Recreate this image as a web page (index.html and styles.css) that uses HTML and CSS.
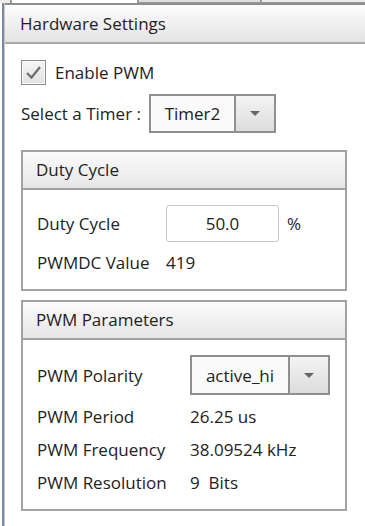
FILE: index.html
```html
<!DOCTYPE html>
<html lang="en">
<head>
  <meta charset="UTF-8" />
  <meta name="viewport" content="width=device-width, initial-scale=1.0" />
  <title>Hardware Settings</title>
  <link rel="stylesheet" href="styles.css">
</head>
<body>
  <!-- Pestañas superiores (solo el borde inferior se ve) -->
  <div class="tabs">
    <span class="tab first"></span>
    <span class="tab active"></span>
    <span class="tab"></span>
    <span class="tab rest"></span>
  </div>

  <div class="frame">
    <div class="pane">
      <div class="pane-title">Hardware Settings</div>

      <div class="pane-body">
        <label class="check">
          <span class="box">
            <svg width="17" height="15" viewBox="0 0 17 15">
              <polyline points="2,8 6.5,12.5 15,2" fill="none" stroke="#6e6e6e" stroke-width="2.2" />
            </svg>
          </span>
          Enable PWM
        </label>

        <div class="timer-row">
          <span>Select a Timer :</span>
          <div class="combo timer">
            <span class="combo-value">Timer2</span>
            <span class="combo-btn"><span class="arrow"></span></span>
          </div>
        </div>

        <!-- Grupo: Duty Cycle -->
        <section class="group duty">
          <div class="group-title">Duty Cycle</div>
          <div class="group-body">
            <div class="row">
              <span class="label">Duty Cycle</span>
              <span class="field">50.0</span>
              <span class="unit">%</span>
            </div>
            <div class="row text">
              <span class="label">PWMDC Value</span>
              <span>419</span>
            </div>
          </div>
        </section>

        <!-- Grupo: PWM Parameters -->
        <section class="group pwm">
          <div class="group-title">PWM Parameters</div>
          <div class="group-body">
            <div class="row">
              <span class="label">PWM Polarity</span>
              <div class="combo polarity">
                <span class="combo-value">active_hi</span>
                <span class="combo-btn"><span class="arrow"></span></span>
              </div>
            </div>
            <div class="row text">
              <span class="label">PWM Period</span>
              <span>26.25 us</span>
            </div>
            <div class="row text">
              <span class="label">PWM Frequency</span>
              <span>38.09524 kHz</span>
            </div>
            <div class="row text">
              <span class="label">PWM Resolution</span>
              <span>9&nbsp; Bits</span>
            </div>
          </div>
        </section>
      </div>
    </div>
  </div>
</body>
</html>
```

FILE: styles.css
```css
/* Estilos generales */
body {
  margin: 0;
  padding: 0;
  font-family: "Open Sans", "Noto Sans", sans-serif;
  font-size: 17px;
  line-height: 23px;
  color: #222;
  background-color: #ffffff;
}

/* Pestañas */
.tabs {
  display: flex;
  height: 3px;
  background-color: #f0f0f0;
}

.tab {
  width: 121px;
  background-color: #dedede;
  border-right: 2px solid #9a9a9a;
  border-bottom: 1px solid #9a9a9a;
}

.tab.first {
  width: 10px;
  background-color: #ececec;
  border-bottom: none;
}

.tab.active {
  width: 125px;
  background-color: #ffffff;
  border-bottom: none;
}

.tab.rest {
  flex: 1;
  background-color: #ececec;
  border-right: none;
}

/* Marco */
.frame {
  margin-left: 2px;
  border-left: 2px solid #7a899b;
  min-height: 523px;
}

.pane {
  border-left: 1px solid #c9c9c9;
  min-height: 523px;
}

.pane-title {
  height: 37px;
  line-height: 37px;
  padding-left: 15px;
  border-top: 2px solid #8e8e8e;
  border-bottom: 2px solid #a8a8a8;
  background: linear-gradient(#fdfdfd, #e3e3e3);
  color: #1e1e1e;
}

.pane-body {
  padding: 16px 18px 0 16px;
}

/* Casilla */
.check {
  display: flex;
  align-items: center;
  gap: 9px;
  height: 25px;
}

.box {
  display: flex;
  align-items: center;
  justify-content: center;
  width: 23px;
  height: 23px;
  border: 1px solid #8c8c8c;
  background: linear-gradient(#f6f6f6, #e1e1e1);
  box-shadow: inset 0 0 0 1px #fafafa;
}

/* Selector de timer */
.timer-row {
  display: flex;
  align-items: center;
  gap: 8px;
  margin-top: 9px;
}

.combo {
  display: flex;
  border: 2px solid #8f8f8f;
  background-color: #fafafa;
}

.combo-value {
  display: flex;
  align-items: center;
  justify-content: center;
  border-right: 2px solid #8f8f8f;
}

.combo-btn {
  display: flex;
  align-items: center;
  justify-content: center;
  flex: 1;
  background: linear-gradient(#f4f4f4, #dcdcdc);
}

.arrow {
  width: 0;
  height: 0;
  border-left: 5px solid transparent;
  border-right: 5px solid transparent;
  border-top: 5px solid #666;
}

.combo.timer {
  width: 123px;
  height: 35px;
}

.combo.timer .combo-value {
  width: 83px;
}

.combo.polarity {
  width: 136px;
  height: 36px;
}

.combo.polarity .combo-value {
  width: 96px;
}

/* Grupos */
.group {
  border: 2px solid #a2a2a2;
  margin-top: 17px;
}

.group.pwm {
  margin-top: 9px;
}

.group-title {
  height: 36px;
  line-height: 36px;
  padding-left: 13px;
  border-bottom: 2px solid #a2a2a2;
  background: linear-gradient(#fbfbfb, #e6e6e6);
}

.group-body {
  display: flex;
  flex-direction: column;
  gap: 9px;
  padding: 15px 14px 15px;
}

.group.pwm .group-body {
  gap: 10px;
}

.row {
  display: flex;
  align-items: center;
}

.duty .label {
  width: 129px;
}

.pwm .label {
  width: 153px;
}

.field {
  display: flex;
  align-items: center;
  justify-content: center;
  width: 111px;
  height: 35px;
  border: 1px solid #c8c8c8;
  border-radius: 3px;
}

.unit {
  margin-left: 8px;
}
```
